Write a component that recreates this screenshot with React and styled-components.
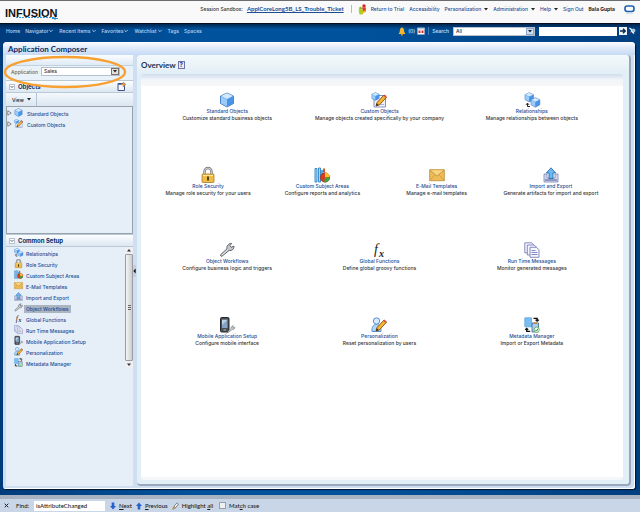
import React, { useState } from 'react';
import styled, { createGlobalStyle, css } from 'styled-components';

const GlobalStyle = createGlobalStyle`
  *, *::before, *::after {
    box-sizing: border-box;
  }
  body {
    margin: 0;
    background: #00468c;
    color: #333;
    font-family: Inter, "Liberation Sans", sans-serif;
    font-size: 5px;
    font-weight: 500;
    line-height: 8px;
  }
  button, input, select {
    font: inherit;
    color: inherit;
    margin: 0;
    padding: 0;
    border: 0;
    background: none;
  }
  svg {
    display: block;
    flex: none;
  }
`;

/* ---------- icons, all drawn on a 16 x 16 grid ---------- */

const Cube = ({ x = 0, y = 0, s = 1 }) => (
  <g transform={`translate(${x} ${y}) scale(${s})`}>
    <path d="M8 1 14.5 4v7.5L8 15 1.5 11.5V4Z" fill="#5ca4f0" stroke="#3a73b8" strokeWidth=".8" />
    <path d="M8 1.3 14 4 8 7 2 4Z" fill="#d3e9ff" />
    <path d="M2 4.5 8 7.5v7L2 11.3Z" fill="#9bcbfa" />
    <path d="M8 7.5 14 4.5v6.8L8 14.5Z" fill="#4a93e6" />
  </g>
);

const Pencil = () => (
  <g>
    <path d="m5 14 1-3.5 7-7.5 2.5 2.3-7 7.5Z" fill="#f5b52c" stroke="#7a3d10" strokeWidth=".8" />
    <path d="m5 14 .8-2.8 1.9 1.9Z" fill="#3a2a1a" />
    <path d="m12.3 3.7 1-1.2 2.4 2.3-1 1.1Z" fill="#d9503a" />
  </g>
);

const Wrench = () => (
  <g>
    <path d="M2.5 14.5 1.3 13 8 6.8C7.4 4 9.5 1.3 12.7 1.4L10.9 3.6l1.3 1.7 2.7-1.2c.4 3-2.3 5-4.7 4.3Z" fill="#c5c8cc" stroke="#5d6268" strokeWidth="1" />
    <path d="m3 13 6-5.5" stroke="#f5f5f5" strokeWidth=".8" />
  </g>
);

const drawings = {
  standard: <Cube />,
  custom: (
    <g>
      <path d="M3 3.5h11.5v11.5H3Z" fill="#eef1fb" stroke="#8790b8" />
      <path d="M5 12.5h8" stroke="#a9b2d6" />
      <Cube s={0.56} />
      <Pencil />
    </g>
  ),
  relationships: (
    <g>
      <Cube s={0.66} />
      <Cube x={6} y={5} s={0.68} />
      <path d="M3.5 14.5v-3M2 12.8l1.5-1.7L5 12.8M3.5 14.5H6" fill="none" stroke="#222" strokeWidth="1" />
    </g>
  ),
  security: (
    <g>
      <path d="M4.5 8V4.5a3.5 3.5 0 0 1 7 0V8" fill="none" stroke="#777" strokeWidth="2.4" />
      <path d="M4.5 8V4.5a3.5 3.5 0 0 1 7 0V8" fill="none" stroke="#ddd" strokeWidth=".9" />
      <rect x="2" y="7" width="12" height="8.5" rx=".8" fill="#edbd45" stroke="#a87c28" strokeWidth=".8" />
      <path d="M3 8.5h10" stroke="#ffe9a0" />
      <path d="M8 9.5v4" stroke="#463109" strokeWidth="1.8" />
    </g>
  ),
  areas: (
    <g>
      <path d="M1 1.5h2V15H1ZM4.5 1h2v14h-2Z" fill="#a9d7f8" stroke="#2e83c8" strokeWidth=".9" />
      <path d="M7 3h2v9H7Z" fill="#5ba6df" />
      <circle cx="11" cy="10.5" r="4.7" fill="#dd3920" stroke="#8a2614" strokeWidth=".6" />
      <path d="M11 10.5V5.8A4.7 4.7 0 0 1 15.6 10Z" fill="#ffc62b" />
      <path d="m11 10.5 4.7 0a4.7 4.7 0 0 1-5.5 4.6Z" fill="#35a63b" />
      <path d="M9 1.5h2v4H9Z" fill="#c75a2a" />
    </g>
  ),
  email: (
    <g>
      <path d="M.7 2.7h14.6v11H.7Z" fill="#eebb55" stroke="#b98a34" strokeWidth=".8" />
      <path d="m1 3.2 7 6 7-6" fill="#f8d382" stroke="#b98a34" strokeWidth=".8" />
      <path d="m1 13.3 5-5.5M15 13.3l-5-5.5" stroke="#cf9838" strokeWidth=".8" />
    </g>
  ),
  transfer: (
    <g>
      <path d="M1 7h3v4h8V7h3v8H1Z" fill="#d3d9ef" stroke="#7a83ae" strokeWidth=".8" />
      <path d="M2 13h12" stroke="#7d87b5" strokeWidth="1.6" />
      <path d="M8 .8 12.7 6H10v5.5H6V6H3.3Z" fill="#6bb9f4" stroke="#1d62ac" strokeWidth=".8" />
    </g>
  ),
  workflows: <Wrench />,
  functions: (
    <g fontFamily="Liberation Serif, serif" fontStyle="italic" fill="#222">
      <text x="3" y="12" fontSize="14">f</text>
      <text x="8" y="15" fontSize="10" fontWeight="bold">x</text>
    </g>
  ),
  messages: (
    <g fill="#f5f6ff" stroke="#7a80b4" strokeWidth=".9">
      <path d="M.8.8h7l2 2v8h-9Z" />
      <path d="M3.3 3h7l2 2v8h-9Z" />
      <path d="M6 5.3h6.5l2.5 2.5v7.5H6Z" />
      <path d="M7.5 8.5h4M7.5 10.5h6M7.5 12.5h6" />
    </g>
  ),
  mobile: (
    <g>
      <rect x="1.5" y=".5" width="8.5" height="14.5" rx="1.2" fill="#4a4e55" stroke="#24272b" />
      <path d="M3 2.8h5.5V11H3Z" fill="#83a2c4" />
      <path d="M3 2.8h5.5L3 8Z" fill="#bed0e4" />
      <path d="M4.5 13h2.5" stroke="#bbb" />
      <g transform="translate(8 8) scale(.52)"><Wrench /></g>
    </g>
  ),
  personalization: (
    <g>
      <circle cx="5.5" cy="4" r="3.2" fill="#d5eafd" stroke="#5591cd" />
      <path d="M1 14.5C.6 10 2.5 7.5 5.5 7.5S10.3 10 10 14.5Z" fill="#b3d7fa" stroke="#5591cd" />
      <Pencil />
    </g>
  ),
  metadata: (
    <g>
      <path d="M.8.8H7.5v9H.8Z" fill="#79bdf0" stroke="#62a9dd" strokeWidth=".8" />
      <path d="M8 6h6.5v9H8Z" fill="#a9cfee" stroke="#3a5f8a" strokeWidth=".8" />
      <path d="M9.5 5.3h3.5v1.5H9.5Z" fill="#c98a3a" />
      <path d="M9.5 1.3h3.7v1.7M11.6 2.7l1.6 1.5 1.6-1.5" fill="none" stroke="#111" strokeWidth="1.3" />
      <path d="M6.2 14.3H2.7v-2M1.2 12.9l1.5-1.5 1.5 1.5" fill="none" stroke="#111" strokeWidth="1.3" />
      <circle cx="12.7" cy="12.7" r="2.6" fill="#eefaee" stroke="#58a95c" strokeWidth=".8" />
      <path d="m11.3 12.8 1.1 1.1 1.8-2.2" fill="none" stroke="#248a2c" />
    </g>
  ),
};

const Icon = ({ name, size = 16 }) => (
  <svg width={size} height={size} viewBox="0 0 16 16" overflow="visible" aria-hidden="true">{drawings[name]}</svg>
);

const Caret = ({ color = '#222' }) => (
  <svg width="4" height="3" viewBox="0 0 4 3" aria-hidden="true"><path d="M0 0h4L2 2.5Z" fill={color} /></svg>
);

const Chevron = () => (
  <svg width="4" height="4" viewBox="0 0 4 4" aria-hidden="true">
    <path d="m.3 1 1.7 1.7L3.7 1" fill="none" stroke="#b8d4f0" strokeWidth=".9" />
  </svg>
);

/* ---------- data ---------- */

const navItems = [
  ['Home', false], ['Navigator', true], ['Recent Items', true], ['Favorites', true],
  ['Watchlist', true], ['Tags', false], ['Spaces', false],
];

const setupItems = [
  ['relationships', 'Relationships'],
  ['security', 'Role Security'],
  ['areas', 'Custom Subject Areas'],
  ['email', 'E-Mail Templates'],
  ['transfer', 'Import and Export'],
  ['workflows', 'Object Workflows'],
  ['functions', 'Global Functions'],
  ['messages', 'Run Time Messages'],
  ['mobile', 'Mobile Application Setup'],
  ['personalization', 'Personalization'],
  ['metadata', 'Metadata Manager'],
];

const overviewRows = [
  [
    ['standard', 'Standard Objects', 'Customize standard business objects'],
    ['custom', 'Custom Objects', 'Manage objects created specifically by your company'],
    ['relationships', 'Relationships', 'Manage relationships between objects'],
  ],
  [
    ['security', 'Role Security', 'Manage role security for your users'],
    ['areas', 'Custom Subject Areas', 'Configure reports and analytics'],
    ['email', 'E-Mail Templates', 'Manage e-mail templates'],
    ['transfer', 'Import and Export', 'Generate artifacts for import and export'],
  ],
  [
    ['workflows', 'Object Workflows', 'Configure business logic and triggers'],
    ['functions', 'Global Functions', 'Define global groovy functions'],
    ['messages', 'Run Time Messages', 'Monitor generated messages'],
  ],
  [
    ['mobile', 'Mobile Application Setup', 'Configure mobile interface'],
    ['personalization', 'Personalization', 'Reset personalization by users'],
    ['metadata', 'Metadata Manager', 'Import or Export Metadata'],
  ],
];

/* ---------- page parts ---------- */

const BrandHeader = () => (
  <Header>
    <Logo>
      <LogoText>INFUSION</LogoText>
      <svg width="42" height="3" viewBox="0 0 42 3" aria-hidden="true">
        <path d="M0 .5h38" stroke="#2f93dd" strokeDasharray="2 1" />
        <path d="M39 0v3M36 1.5h6" stroke="#2e8acb" />
      </svg>
    </Logo>
    <HeaderLinks>
      <Sandbox>
        <span>Session Sandbox:</span>
        <SandboxLink href="#sandbox">ApplCoreLong5B_LS_Trouble_Ticket</SandboxLink>
      </Sandbox>
      <Divider />
      <HeaderLink href="#trial">
        <svg width="9" height="11" viewBox="0 0 9 11" aria-hidden="true">
          <circle cx="6" cy="2" r="1.7" fill="#d9261c" />
          <path d="M4 3.5h4L7.5 8 5 8.5Z" fill="#e0402a" />
          <circle cx="2.5" cy="4.2" r="1.5" fill="#8cc21f" />
          <path d="M.5 5.5h4L5.5 8l-1 2.5H1.5Z" fill="#a6cf22" />
          <path d="m4 9 3-2" stroke="#f1c21b" strokeWidth="1.5" />
        </svg>
        Return to Trial
      </HeaderLink>
      <HeaderLink href="#accessibility">Accessibility</HeaderLink>
      <MenuButton type="button">Personalization <Caret /></MenuButton>
      <MenuButton type="button">Administration <Caret /></MenuButton>
      <MenuButton type="button">Help <Caret /></MenuButton>
      <HeaderLink href="#signout">Sign Out</HeaderLink>
      <UserName>Bala Gupta</UserName>
      <svg width="11" height="9" viewBox="0 0 11 9" aria-hidden="true">
        <rect x="1" y="1" width="9" height="5.5" rx="2.2" fill="none" stroke="#1c5fae" strokeWidth="1.6" />
        <path d="M2 8.5h7" stroke="#c9d4e4" strokeWidth=".8" />
      </svg>
    </HeaderLinks>
  </Header>
);

const NavBar = () => (
  <Nav>
    <NavLinks>
      {navItems.map(([label, menu]) => (
        menu
          ? <NavButton type="button" key={label}>{label}<Chevron /></NavButton>
          : <NavLink href={`#${label.toLowerCase()}`} key={label}>{label}</NavLink>
      ))}
    </NavLinks>
    <SearchForm onSubmit={e => e.preventDefault()}>
      <Alerts type="button" aria-label="Notifications">
        <svg width="8" height="9" viewBox="0 0 8 9" aria-hidden="true">
          <path d="M4 .5C1.8.8 2 3.5 1.6 5.2L.5 7h7L6.4 5.2C6 3.5 6.2.8 4 .5Z" fill="#f7b733" />
          <circle cx="4" cy="7.7" r="1" fill="#e08b1c" />
        </svg>
        (0)
      </Alerts>
      <IconButton type="button" aria-label="Calendar">
        <svg width="8" height="8" viewBox="0 0 8 8" aria-hidden="true">
          <path d="M.5 1h7v6.5h-7Z" fill="#fff" stroke="#8fa2c0" strokeWidth=".6" />
          <path d="M.5.7h7v1.8h-7Z" fill="#b6c4da" />
          <path d="M1.5 3.5h2v2.5h-2ZM4.5 3.5h2v2.5h-2Z" fill="#d8312b" />
        </svg>
      </IconButton>
      <Divider $dark />
      <label htmlFor="scope">Search</label>
      <SelectBox $width="82px" $gap="2px">
        <select id="scope" defaultValue="All"><option>All</option></select>
        <Arrow $blue><Caret color="#123" /></Arrow>
      </SelectBox>
      <SearchInput type="text" aria-label="Search text" />
      <GoButton type="submit" aria-label="Go">
        <svg width="6" height="6" viewBox="0 0 6 6" aria-hidden="true">
          <path d="M0 3h4.5M3 .8 5.2 3 3 5.2" fill="none" stroke="#0a2850" strokeWidth="1.4" />
        </svg>
      </GoButton>
      <IconButton type="button" aria-label="Advanced search">
        <svg width="7" height="8" viewBox="0 0 7 8" aria-hidden="true">
          <path d="M.5 1 3 3M2 3.5l3 3" stroke="#e8eef8" strokeWidth="1.5" />
          <circle cx="4.5" cy="3.5" r="1.5" fill="#8fc0e8" stroke="#fff" strokeWidth=".6" />
          <path d="m1 6.5 1.5-1.5" stroke="#c84436" />
        </svg>
      </IconButton>
    </SearchForm>
  </Nav>
);

const SectionHead = ({ title, children }) => (
  <SectionBar>
    <Toggle type="button" aria-label={`Collapse ${title}`}>
      <svg width="4" height="4" viewBox="0 0 4 4" aria-hidden="true">
        <path d="m.5 1 1.5 1.6L3.5 1" fill="none" stroke="#345" strokeWidth=".8" />
      </svg>
    </Toggle>
    <SectionTitle>{title}</SectionTitle>
    {children}
  </SectionBar>
);

const Sidebar = () => {
  const [selected, setSelected] = useState('workflows');

  return (
    <Side>
      <ApplicationRow>
        <AppLabel htmlFor="application">Application</AppLabel>
        <SelectBox $width="79px">
          <select id="application" defaultValue="Sales"><option>Sales</option></select>
          <Arrow><Caret /></Arrow>
        </SelectBox>
        <Highlight viewBox="0 0 122 34" aria-hidden="true">
          <ellipse cx="61" cy="17" rx="60" ry="15" fill="none" stroke="#f7a133" strokeWidth="2.4" />
        </Highlight>
      </ApplicationRow>
      <SectionHead title="Objects">
        <IconButton type="button" aria-label="New object">
          <svg width="9" height="9" viewBox="0 0 9 9" aria-hidden="true">
            <path d="M1 1.5h6.5v7H1Z" fill="#f4f7ff" stroke="#42507c" />
            <path d="M1 2.5h6" stroke="#6076b5" />
            <path d="M6.5 0v5M4 2.5h5" stroke="#e89a2b" strokeWidth="1.4" />
          </svg>
        </IconButton>
      </SectionHead>
      <Toolbar>
        <ViewButton type="button">View <Caret /></ViewButton>
      </Toolbar>
      <Tree>
        {[['standard', 'Standard Objects'], ['custom', 'Custom Objects']].map(([icon, label]) => (
          <TreeRow key={icon}>
            <IconButton type="button" aria-label={`Expand ${label}`}>
              <svg width="5" height="6" viewBox="0 0 5 6" aria-hidden="true">
                <path d="M.8.8 4.2 3 .8 5.2Z" fill="#fff" stroke="#555" strokeWidth=".7" />
              </svg>
            </IconButton>
            <Icon name={icon} size={9} />
            <TreeLink href={`#${icon}`}>{label}</TreeLink>
          </TreeRow>
        ))}
      </Tree>
      <SectionHead title="Common Setup" />
      <SetupArea>
        <SetupList>
          {setupItems.map(([icon, label]) => (
            <SetupRow key={icon}>
              <Icon name={icon} size={9} />
              <SetupLink href={`#${icon}`} $selected={selected === icon} onClick={() => setSelected(icon)}>
                {label}
              </SetupLink>
            </SetupRow>
          ))}
        </SetupList>
        <Scrollbar aria-hidden="true">
          <svg width="8" height="7" viewBox="0 0 8 7"><path d="M2 4.5 4 2l2 2.5Z" fill="#333" /></svg>
          <Thumb><i /><i /><i /></Thumb>
          <svg width="8" height="7" viewBox="0 0 8 7"><path d="M2 2.5h4L4 5Z" fill="#333" /></svg>
        </Scrollbar>
      </SetupArea>
    </Side>
  );
};

const Overview = () => (
  <Panel>
    <PanelHead>
      <PanelTitle>Overview</PanelTitle>
      <HelpButton type="button" aria-label="Help on Overview">?</HelpButton>
    </PanelHead>
    <Canvas>
      {overviewRows.map(row => (
        <CardRow key={row[0][0]}>
          {row.map(([icon, title, text]) => (
            <Card key={icon}>
              <Icon name={icon} />
              <CardLink href={`#${icon}`}>{title}</CardLink>
              <CardText>{text}</CardText>
            </Card>
          ))}
        </CardRow>
      ))}
    </Canvas>
  </Panel>
);

const FindBar = () => {
  const [term, setTerm] = useState('isAttributeChanged');

  return (
    <Find>
      <CloseButton type="button" aria-label="Close find bar">
        <svg width="5" height="5" viewBox="0 0 5 5" aria-hidden="true">
          <path d="m.7.7 3.6 3.6M4.3.7.7 4.3" stroke="#222" />
        </svg>
      </CloseButton>
      <FindLabel htmlFor="find">Find:</FindLabel>
      <FindInput id="find" type="text" value={term} onChange={e => setTerm(e.target.value)} />
      <FindButton type="button">
        <svg width="6" height="8" viewBox="0 0 6 8" aria-hidden="true"><path d="M1.7.5h2.6V4H6L3 7.5 0 4h1.7Z" fill="#2463cf" /></svg>
        <span><u>N</u>ext</span>
      </FindButton>
      <FindButton type="button">
        <svg width="6" height="8" viewBox="0 0 6 8" aria-hidden="true"><path d="M1.7 7.5h2.6V4H6L3 .5 0 4h1.7Z" fill="#2463cf" /></svg>
        <span><u>P</u>revious</span>
      </FindButton>
      <FindButton type="button">
        <svg width="7" height="8" viewBox="0 0 7 8" aria-hidden="true">
          <path d="M2 4.5 5 .8 6.5 2 3.5 5.8Z" fill="#fff" stroke="#555" strokeWidth=".7" />
          <path d="M2 4.5 3.5 5.8 1 7.5 .5 7Z" fill="#e3b52c" stroke="#555" strokeWidth=".4" />
        </svg>
        <span>Highlight <u>a</u>ll</span>
      </FindButton>
      <MatchCase>
        <input type="checkbox" />
        <span>Mat<u>c</u>h case</span>
      </MatchCase>
    </Find>
  );
};

const App = () => (
  <Page>
    <GlobalStyle />
    <BrandHeader />
    <NavBar />
    <Shell>
      <ShellTitle>Application Composer</ShellTitle>
      <Columns>
        <Sidebar />
        <Splitter type="button" aria-label="Collapse pane">
          <svg width="3" height="12" viewBox="0 0 3 12" aria-hidden="true">
            <path d="M0 0h3v12H0Z" fill="#c4d0de" />
            <path d="M2.7 3.5v5L.3 6Z" fill="#111" />
          </svg>
        </Splitter>
        <Overview />
      </Columns>
    </Shell>
    <FindBar />
  </Page>
);

/* ---------- styles ---------- */

const Page = styled.div`
  display: flex;
  flex-direction: column;
  min-height: 100vh;
  background: linear-gradient(90deg, #003c7c, #00529c 30%, #00529c 55%, #003f80);
`;

const Header = styled.header`
  display: flex;
  align-items: center;
  justify-content: space-between;
  height: 24px;
  padding: 0 5px;
  border-top: 1px solid #6b6b70;
  border-bottom: 1px solid #05111f;
  background: #f9f9fa;
`;

const Logo = styled.div`
  display: flex;
  flex-direction: column;
  align-items: flex-end;
  padding-top: 4px;
`;

const LogoText = styled.span`
  font-family: "Liberation Sans", sans-serif;
  font-size: 11px;
  font-weight: bold;
  line-height: 8px;
  color: #111;
`;

const HeaderLinks = styled.div`
  display: flex;
  align-items: center;
  gap: 5px;
  padding-bottom: 6px;
`;

const Sandbox = styled.div`
  display: flex;
  gap: 4px;
  padding-right: 1px;
`;

const link = css`
  color: #1b4d95;
  text-decoration: none;
`;

const SandboxLink = styled.a`
  ${link}
  font-family: Lato, sans-serif;
  font-size: 6px;
  font-weight: bold;
  text-decoration: underline;
`;

const Divider = styled.span`
  width: 1px;
  height: 8px;
  margin: 0 1px;
  background: ${props => (props.$dark ? '#3f78b5' : '#a9bcd6')};
`;

const HeaderLink = styled.a`
  ${link}
  display: flex;
  align-items: center;
  gap: 4px;
`;

const MenuButton = styled.button`
  ${link}
  display: flex;
  align-items: center;
  gap: 3px;
`;

const UserName = styled.span`
  font-weight: bold;
  color: #222;
  padding-right: 4px;
`;

const Nav = styled.nav`
  display: flex;
  align-items: center;
  justify-content: space-between;
  height: 18px;
  padding: 0 4px 4px 6px;
  color: #cfe1f5;
  background: linear-gradient(#00254f, transparent 5px);
`;

const NavLinks = styled.div`
  display: flex;
  align-items: center;
  gap: 5px;
`;

const NavLink = styled.a`
  color: #b9d3ef;
  text-decoration: none;
`;

const NavButton = styled.button`
  display: flex;
  align-items: center;
  gap: 1px;
  padding-right: 1px;
  color: #b9d3ef;
`;

const SearchForm = styled.form`
  display: flex;
  align-items: center;
  gap: 2px;
`;

const Alerts = styled.button`
  display: flex;
  align-items: center;
  gap: 2px;
`;

const IconButton = styled.button`
  display: flex;
`;

const SelectBox = styled.div`
  position: relative;
  width: ${props => props.$width};
  margin: 0 ${props => props.$gap || '0'};

  select {
    display: block;
    width: 100%;
    height: 9px;
    padding: 0 10px 0 2px;
    appearance: none;
    border: 1px solid #b4c0cf;
    background: #fff;
    color: #333;
    line-height: 7px;
  }
`;

const Arrow = styled.span`
  position: absolute;
  top: 1px;
  right: 1px;
  display: flex;
  align-items: center;
  justify-content: center;
  width: 8px;
  height: 7px;
  pointer-events: none;
  border: 1px solid ${props => (props.$blue ? '#8ba6c8' : '#77736c')};
  background: ${props => (props.$blue ? '#cfdef0' : '#e3e0d8')};
`;

const SearchInput = styled.input`
  width: 78px;
  height: 9px;
  padding: 0 2px;
  background: #fff;
  color: #333;
`;

const GoButton = styled.button`
  display: flex;
  align-items: center;
  justify-content: center;
  width: 8px;
  height: 8px;
  background: #eef3fa;
`;

const Shell = styled.main`
  display: flex;
  flex: 1;
  flex-direction: column;
  margin: 0 5px 6px 3px;
  padding: 0 4px 3px 3px;
  border-radius: 4px 4px 3px 3px;
  background: #cfdff1;
  box-shadow: inset -1px -1px #fff, 1px 1px 1px #001530;
`;

const ShellTitle = styled.h1`
  margin: 0 -4px 0 -3px;
  padding: 2px 5px 1px;
  border-radius: 4px 4px 0 0;
  background: linear-gradient(#fdfeff, #e3edfa 5px, #c6daf6);
  color: #0b2c63;
  font-family: Lato, sans-serif;
  font-size: 8px;
  line-height: 10px;
`;

const Columns = styled.div`
  display: flex;
  flex: 1;
`;

const Side = styled.aside`
  display: flex;
  flex-direction: column;
  flex: none;
  width: 127px;
  background: #e6eff8;
`;

const ApplicationRow = styled.div`
  position: relative;
  display: flex;
  align-items: center;
  justify-content: space-between;
  padding: 12px 13px 4px 5px;
  background: linear-gradient(#fafdff, #dfeaf5 10px, #c2d1df 10px, #c2d1df 11px, #e9f1f9 11px);
`;

const AppLabel = styled.label`
  color: #6f6a50;
`;

/* orange marker drawn round the application picker */
const Highlight = styled.svg`
  position: absolute;
  top: 0;
  left: -2px;
  z-index: 1;
  width: 122px;
  height: 34px;
  overflow: visible;
  pointer-events: none;
`;

const SectionBar = styled.div`
  display: flex;
  align-items: center;
  gap: 3px;
  height: 13px;
  padding: 0 7px 0 3px;
  border-top: 1px solid #b9c9d8;
  border-bottom: 1px solid #b9c9d8;
  background: linear-gradient(#fcfeff, #dbe7f1);
`;

const Toggle = styled.button`
  display: flex;
  align-items: center;
  justify-content: center;
  width: 6px;
  height: 6px;
  border: 1px solid #b7c3d0;
  background: #fff;
`;

const SectionTitle = styled.h2`
  flex: 1;
  margin: 0;
  color: #0b2c63;
  font-size: 6px;
  line-height: 9px;
`;

const Toolbar = styled.div`
  display: flex;
  height: 13px;
  background: linear-gradient(#f3f8fc, #dbe6f1);
`;

const ViewButton = styled.button`
  display: flex;
  align-items: center;
  gap: 3px;
  padding: 0 5px 0 6px;
  border-right: 1px solid #b7c6d5;
  color: #222;
`;

const Tree = styled.div`
  height: 128px;
  border: 1px solid #98a2ad;
  background: #e6eff8;
`;

const TreeRow = styled.div`
  display: flex;
  align-items: center;
  height: 11px;
  gap: 2px;
`;

const TreeLink = styled.a`
  ${link}
  padding: 2px 0 0 2px;
`;

const SetupArea = styled.div`
  display: flex;
`;

const SetupList = styled.ul`
  flex: 1;
  margin: 0;
  padding: 0 0 0 8px;
  list-style: none;
`;

const SetupRow = styled.li`
  display: flex;
  align-items: center;
  gap: 1px;
  height: 11px;
`;

const SetupLink = styled.a`
  ${link}
  margin-top: 2px;
  padding: 0 2px;
  background: ${props => (props.$selected ? '#abb4c1' : 'transparent')};
`;

const Scrollbar = styled.div`
  display: flex;
  flex-direction: column;
  width: 8px;
  background: #eeeff1;
`;

const Thumb = styled.div`
  display: flex;
  flex: 1;
  flex-direction: column;
  align-items: center;
  justify-content: center;
  gap: 1px;
  border: 1px solid #9a9da1;
  border-radius: 1px;
  background: linear-gradient(90deg, #f4f4f4, #cdced1);

  i {
    width: 3px;
    height: 1px;
    background: #666;
  }
`;

const Splitter = styled.button`
  display: flex;
  align-items: center;
  width: 4px;
`;

const Panel = styled.section`
  display: flex;
  flex: 1;
  flex-direction: column;
  padding: 0 6px 4px 4px;
  border-right: 2px solid #98a8bc;
  border-bottom: 2px solid #98a8bc;
  border-radius: 4px;
  background: linear-gradient(#f3f8fb, #e3eff6 18px);
`;

const PanelHead = styled.div`
  display: flex;
  align-items: center;
  gap: 2px;
  height: 19px;
`;

const PanelTitle = styled.h2`
  margin: 0;
  color: #1c3050;
  font-family: Lato, sans-serif;
  font-size: 8px;
  line-height: 10px;
`;

const HelpButton = styled.button`
  width: 7px;
  height: 8px;
  border: 1px solid #6b74a8;
  background: #e8ebfb;
  color: #28337a;
  font-size: 6px;
  font-weight: bold;
  line-height: 6px;
`;

const Canvas = styled.div`
  flex: 1;
  padding: 18px 15px 0 10px;
  border-bottom: 3px solid #f5f6f7;
  border-radius: 3px;
  background: linear-gradient(#cfdcee, #f3f5f8 6px, #f7f7f7 12px, #fff 12px);
`;

const CardRow = styled.div`
  display: flex;
  height: 75px;
`;

const Card = styled.article`
  display: flex;
  flex: 1 1 0;
  flex-direction: column;
  align-items: center;
  min-width: 0;
  white-space: nowrap;
`;

const CardLink = styled.a`
  ${link}
  line-height: 7px;
`;

const CardText = styled.p`
  margin: 0;
  line-height: 7px;
`;

const Find = styled.footer`
  display: flex;
  align-items: center;
  height: 17px;
  padding-left: 4px;
  border-top: 4px solid #a9b2c0;
  background: #c8d6e8;
  color: #1c1c1c;
  font-family: Lato, "Open Sans", sans-serif;
  font-size: 6px;
`;

const CloseButton = styled.button`
  display: flex;
  margin-right: 7px;
`;

const FindLabel = styled.label`
  margin-right: 5px;
`;

const FindInput = styled.input`
  width: 71px;
  height: 10px;
  margin-right: 5px;
  padding: 0 2px;
  background: #fff;
`;

const FindButton = styled.button`
  display: flex;
  align-items: center;
  gap: 3px;
  margin-right: 4px;
`;

const MatchCase = styled.label`
  display: flex;
  align-items: center;
  gap: 3px;
  margin-left: 2px;

  input {
    width: 7px;
    height: 7px;
    appearance: none;
    border: 1px solid #97a0ac;
    background: #eef0f3;
  }
  input:checked {
    background: #2463cf;
  }
`;

export default App;
